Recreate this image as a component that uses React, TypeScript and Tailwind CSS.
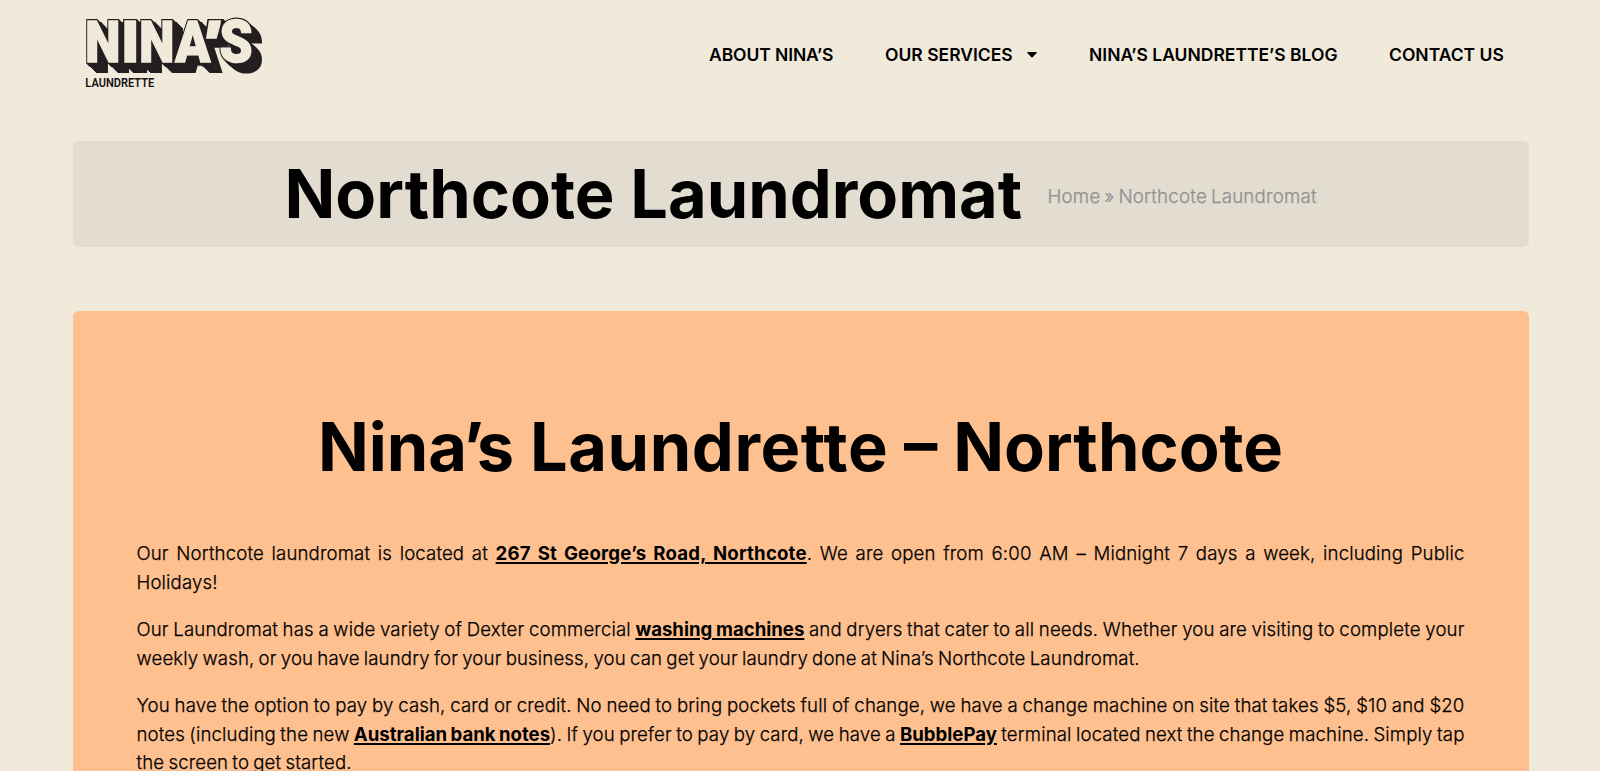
import React from "react";

const letters = [
  { char: "N", x: 15.3, y: 57, width: 35, size: 58, skew: 0 },
  { char: "I", x: 51.3, y: 57, width: 18, size: 58, skew: 0 },
  { char: "N", x: 69.3, y: 57, width: 35, size: 58, skew: 0 },
  { char: "A", x: 105.3, y: 57, width: 35, size: 58, skew: 0 },
  { char: "'", x: 131, y: 60.5, width: 13, size: 60, skew: -9 },
  { char: "S", x: 149.5, y: 57.4, width: 33, size: 60, skew: 0 },
];

const depth = [1, 2, 3, 4, 5, 6, 7, 8, 9, 10];

const Logo = () => (
  <svg width="200" height="95" viewBox="0 0 200 95" className="block">
    <defs>
      <g id="wordmark" fontFamily="Roboto, sans-serif" fontWeight="900" strokeLinejoin="miter">
        {letters.map((l, i) => (
          <text
            key={i}
            transform={`translate(${l.x} ${l.y}) skewX(${l.skew})`}
            fontSize={l.size}
            textLength={l.width}
            lengthAdjust="spacingAndGlyphs"
          >
            {l.char}
          </text>
        ))}
      </g>
    </defs>
    <g fill="#231f20" stroke="#231f20" strokeWidth="4">
      <use href="#wordmark" />
      {depth.map((d) => (
        <use key={d} href="#wordmark" x={d * 0.96} y={d * 0.87} />
      ))}
    </g>
    <use href="#wordmark" fill="#f1e9da" stroke="#f1e9da" strokeWidth="1.6" />
    <text
      x="15.3"
      y="82"
      fontFamily="Roboto, sans-serif"
      fontWeight="600"
      fontSize="13"
      fill="#111"
      textLength="69"
      lengthAdjust="spacingAndGlyphs"
    >
      LAUNDRETTE
    </text>
  </svg>
);

const Link = ({ children }: { children: React.ReactNode }) => (
  <a
    href="#"
    className="font-bold tracking-normal underline decoration-[1.5px] underline-offset-[2px] [-webkit-text-stroke:0]"
  >
    {children}
  </a>
);

const App = () => {
  return (
    <div className="h-[771px] overflow-hidden bg-[#f1e9da] font-['Inter',sans-serif] text-black">
      <header className="flex h-[140.5px] items-start justify-between pl-[70px] pr-[97px] pt-[5px]">
        <Logo />
        <nav className="flex pt-[37px] text-[17.5px] leading-[26px] font-semibold whitespace-nowrap">
          <a href="#" className="w-[176px] tracking-[-0.1px]">
            ABOUT NINA’S
          </a>
          <a href="#" className="flex w-[204px] items-center">
            OUR SERVICES
            <svg width="10" height="6" viewBox="0 0 10 6" className="ml-[14px]">
              <path d="M0.8 0h8.4q1 .3.4 1.1L5.6 5.2q-.6.5-1.2 0L.4 1.1Q-.2.3.8 0z" />
            </svg>
          </a>
          <a href="#" className="w-[300px]">
            NINA’S LAUNDRETTE’S BLOG
          </a>
          <a href="#" className="w-[114px]">
            CONTACT US
          </a>
        </nav>
      </header>

      <section className="ml-[72.5px] flex h-[106.5px] w-[1456px] items-center rounded-md bg-[#e3dcd0] pl-[212px]">
        <h1 className="w-[763px] pt-[1px] text-[66.7px] leading-[80px] font-bold whitespace-nowrap">
          Northcote Laundromat
        </h1>
        <p className="pt-[6px] text-[18.7px] leading-7 font-light tracking-[0.22px] [word-spacing:-1.6px] text-[#919191] [-webkit-text-stroke:0.25px]">
          Home » Northcote Laundromat
        </p>
      </section>

      <main className="ml-[72.5px] mt-[64px] h-[460px] w-[1456px] rounded-t-md bg-[#ffc090] px-[64px] pt-[96px]">
        <h2 className="text-center text-[66.7px] leading-[80px] font-bold whitespace-nowrap">
          Nina<span className="-ml-[4px] tracking-[-7px]">’</span>s{" "}
          <span className="tracking-[0.6px]">Laundrette</span> – Northcote
        </h2>
        <div className="mt-[52px] space-y-[19.2px] text-justify text-[18.6px] leading-[28.5px] font-light tracking-[0.15px] [-webkit-text-stroke:0.25px]">
          <p>
            Our Northcote laundromat is located at{" "}
            <Link>
              <span className="tracking-[0.2px]">267 St George’s Road, Northcote</span>
            </Link>
            . We are open from 6:00 AM – Midnight 7 days a week, including Public Holidays!
          </p>
          <p className="[word-spacing:-1.2px]">
            Our Laundromat has a wide variety of Dexter commercial <Link>washing machines</Link> and dryers that cater
            to all needs. Whether you are visiting to complete your weekly wash, or you have laundry for your business,
            you can get your laundry done at Nina’s Northcote Laundromat.
          </p>
          <p className="[word-spacing:-1.2px]">
            You have the option to pay by cash, card or credit. No need to bring pockets full of change, we have a
            change machine on site that takes $5, $10 and $20 notes (including the new{" "}
            <Link>Australian bank notes</Link>). If you prefer to pay by card, we have a <Link>BubblePay</Link> terminal
            located next the change machine. Simply tap the screen to get started.
          </p>
        </div>
      </main>
    </div>
  );
};

export default App;
